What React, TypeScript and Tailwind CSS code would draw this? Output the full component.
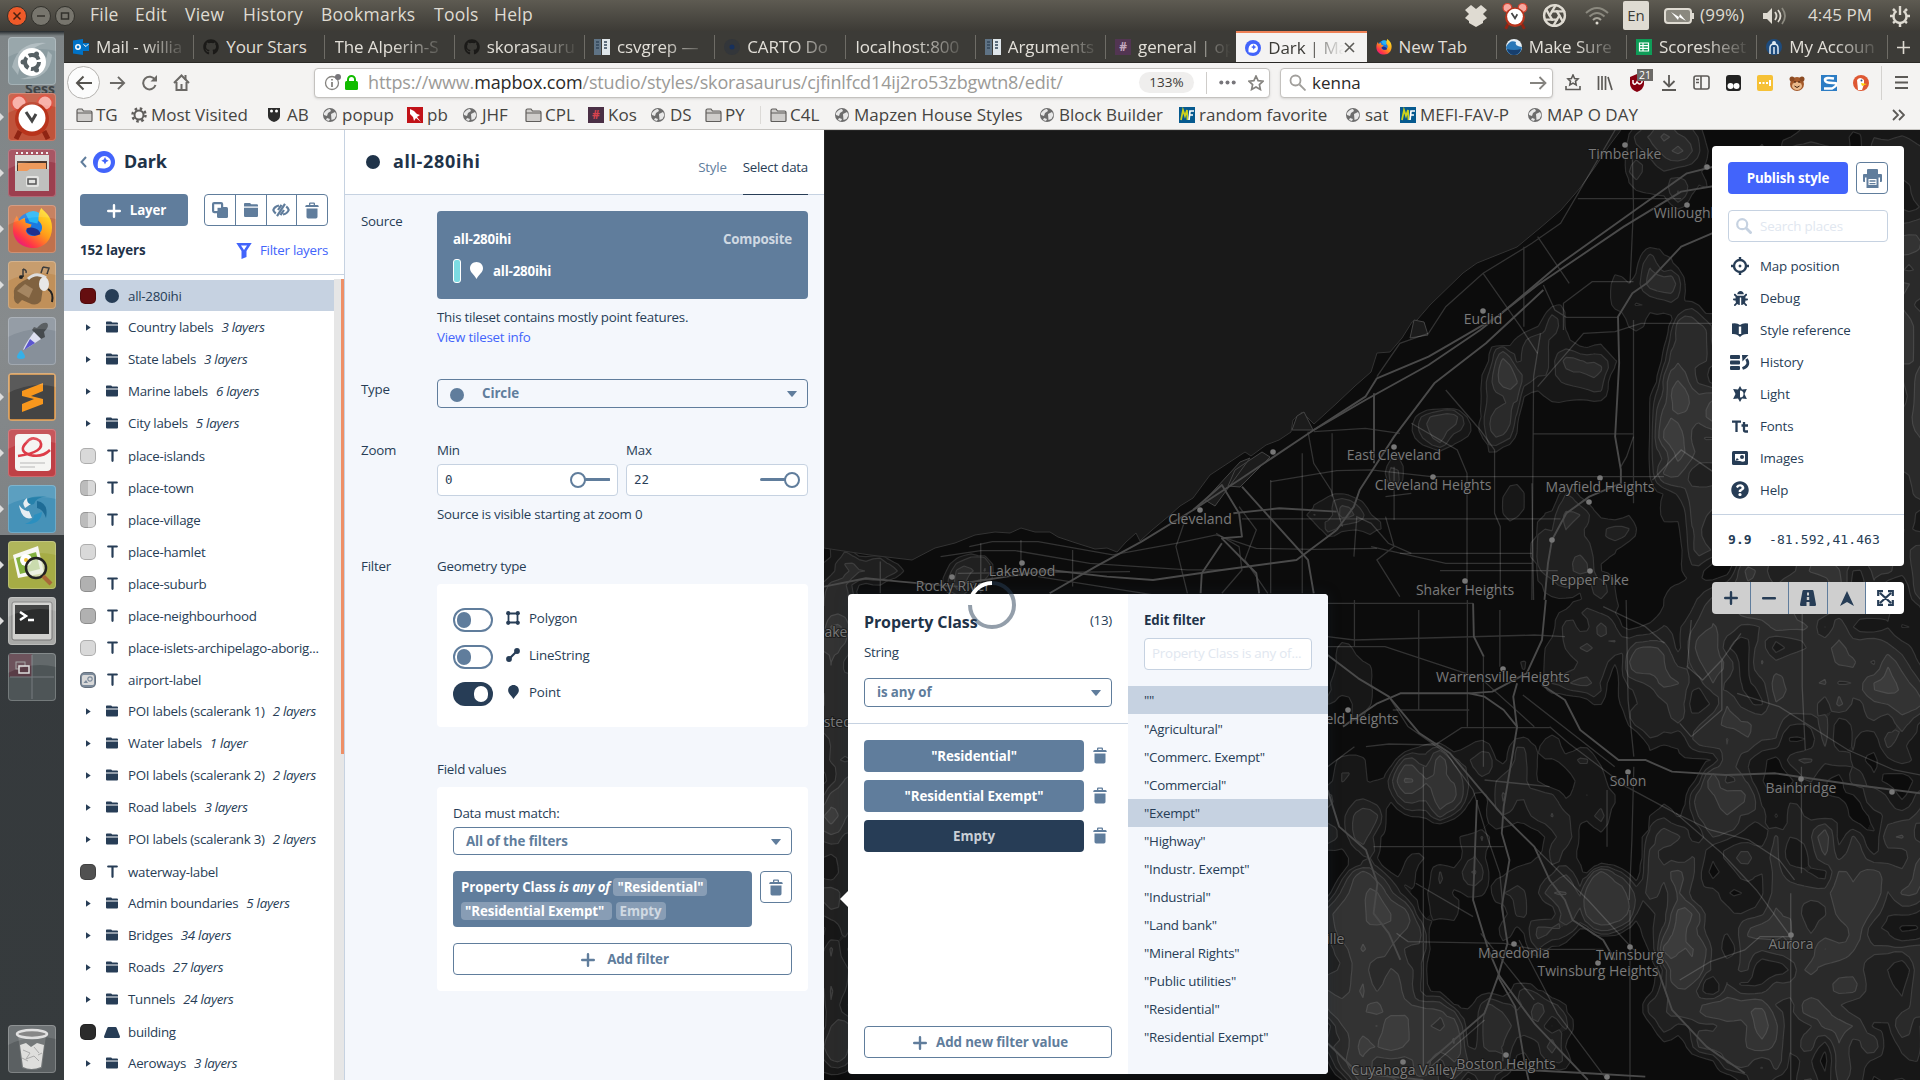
import React from "react";
import { FaGithub, FaBug, FaQuestionCircle } from "react-icons/fa";
import { Aperture } from "lucide-react";

const UI = "font-['Open_Sans',sans-serif]";

/* ---------- shared glyphs ---------- */
const Trash = ({ className = "" }: { className?: string }) => (
  <svg viewBox="0 0 14 17" width="14" height="17" fill="currentColor" className={className}>
    <path d="M4 3V1.500Q4 .4 5.100 .4h3.800q1.100 0 1.100 1.100V3h2.400q1.400 0 1.400 2H.2q0-2 1.400-2zM5.300 3h3.400V1.700H5.300zM1.500 6.600h11v8.200q0 1.600-1.600 1.600H3.100q-1.600 0-1.600-1.600z" />
  </svg>
);
const Folder = ({ className = "" }: { className?: string }) => (
  <svg viewBox="0 0 12 12" width="12" height="12" fill="currentColor" className={className}>
    <path d="M0 1.200Q0 .4 .8 .4h4.400l1 1h4.800q1 0 1 1v1H0zM0 4.600h12v6q0 1-1 1H1q-1 0-1-1z" />
  </svg>
);
const Plus = ({ s = 14, className = "" }: { s?: number; className?: string }) => (
  <svg viewBox="0 0 14 14" width={s} height={s} stroke="currentColor" strokeWidth="2.400" strokeLinecap="round" className={className}>
    <path d="M7 1.200v11.600M1.200 7h11.600" />
  </svg>
);
const Caret = () => (
  <svg viewBox="0 0 10 6" width="10" height="6" fill="currentColor"><path d="M.5 0h9q.6 0 .2.500L5.600 5.500q-.6.600-1.200 0L.3.500Q-.1 0 .5 0z" /></svg>
);
const Pin = ({ w = 12, h = 16, className = "" }: { w?: number; h?: number; className?: string }) => (
  <svg viewBox="0 0 13 17" width={w} height={h} fill="currentColor" className={className}><path d="M6.500 0C10.200 0 13 2.800 13 6.300c0 4-3.800 6-6.500 10.700C3.800 12.300 0 10.300 0 6.300 0 2.800 2.800 0 6.500 0z" /></svg>
);
const MapboxLogo = ({ s }: { s: number }) => (
  <svg viewBox="0 0 22 22" width={s} height={s}>
    <circle cx="11" cy="11" r="11" fill="#4264fb" />
    <path d="M5 17c-.6-3.800-.3-7.800 2-10.100a6.300 6.300 0 0 1 9 0c2.500 2.500 2.500 6.400 0 8.900C13.600 18 9 17.700 5 17z" fill="#fff" />
    <path d="M12 6l1.200 2.500 2.500 1.200-2.500 1.200L12 13.400l-1.200-2.500-2.500-1.200 2.500-1.200z" fill="#4264fb" />
  </svg>
);
const Globe = () => (
  <svg viewBox="0 0 16 16" width="16" height="16"><circle cx="8" cy="8" r="7" fill="#6d6d6d" /><path d="M2 6q3-4 6-4l1 2-3 2-1 3-3-1zM9 7l4-2 1.500 3-2 4-3 1zM5 11l3 1-1 2-3-1z" fill="#e8e8e8" /></svg>
);
const FolderOutline = () => (
  <svg viewBox="0 0 17 16" width="17" height="16" fill="#cfcdcb" stroke="#5f5d5b" strokeWidth="1.200"><path d="M1 3.500q0-1.500 1.500-1.500h3.500l1.500 2h7q1.500 0 1.500 1.500v8q0 1-1 1h-13q-1 0-1-1zM1 6h15" /></svg>
);
const Firefox = ({ s }: { s: number }) => (
  <svg viewBox="0 0 42 42" width={s} height={s}>
    <defs><linearGradient id="ffx" x1="0.900" y1="0.100" x2="0.200" y2="1"><stop offset="0" stopColor="#ffe226" /><stop offset=".45" stopColor="#ff9a1a" /><stop offset=".8" stopColor="#ff3647" /><stop offset="1" stopColor="#e3158a" /></linearGradient></defs>
    <circle cx="21" cy="21" r="17" fill="#1c79e0" />
    <path d="M14 6q8-6 15 0l-3 10-8-2z" fill="#25b4f5" />
    <path d="M5 8l2 5 6-3 1 5 6 2-1 3-5 3c2 6 8 7 13 4 6-5 4-11 0-14 0-6 1-10 3-13 3 4 11 8 11 20 0 13-8 21-19 21S1 34 1 22c0-6 1-10 4-14z" fill="url(#ffx)" />
    <path d="M15 21q4-2 9 0 5 2 5 6-6 3-11 0-4-2-3-6z" fill="#20308f" />
  </svg>
);

/* ---------- system bar ---------- */
const MENU: [string, number][] = [["File", 45], ["Edit", 50], ["View", 58], ["History", 78], ["Bookmarks", 113], ["Tools", 60], ["Help", 60]];

function SystemBar() {
  return (
    <div className="flex h-[31px] w-full items-center bg-gradient-to-b from-[#5e5b52] to-[#3d3b36] text-[17px] text-[#dfdbd2]">
      <div className="flex w-[90px] gap-[4px] pl-[7px]">
        <svg width="20" height="20" viewBox="0 0 20 20"><circle cx="10" cy="10" r="9.500" fill="#ef5a29" stroke="#32312c" /><path d="M6.500 6.500l7 7m0-7l-7 7" stroke="#4a2010" strokeWidth="1.500" /></svg>
        <svg width="20" height="20" viewBox="0 0 20 20"><circle cx="10" cy="10" r="9.500" fill="#77756d" stroke="#32312c" /><path d="M6 10h8" stroke="#33322d" strokeWidth="1.500" /></svg>
        <svg width="20" height="20" viewBox="0 0 20 20"><circle cx="10" cy="10" r="9.500" fill="#77756d" stroke="#32312c" /><path d="M6.500 7h7v6h-7z" fill="none" stroke="#33322d" strokeWidth="1.500" /></svg>
      </div>
      {MENU.map(([t, w]) => (
        <div key={t} className="mb-[2px] shrink-0 whitespace-nowrap text-[17.500px] leading-[29px] tracking-[0.250px]" style={{ width: w }}>{t}</div>
      ))}
      <div className="flex-1" />
      <div className="flex w-[456px] items-center">
        <svg width="24" height="24" viewBox="0 0 24 24" fill="#dfdbd2"><path d="M7 1l5 4 5-4 6 5-4 4 4 4-4 3v2l-7 4-7-4v-2l-4-3 4-4-4-4z" /></svg>
        <svg className="ml-[13px]" width="28" height="28" viewBox="0 0 48 48"><ClockArt /></svg>
        <Aperture className="ml-[13px]" size={25} color="#dfdbd2" strokeWidth={2.300} />
        <svg className="ml-[18px]" width="24" height="20" viewBox="0 0 24 20" fill="none" stroke="#a5a298" strokeWidth="2"><path d="M1 7q11-10 22 0M4.500 10.500q7.500-7 15 0" stroke="#8b897f" /><path d="M8 14q4-4 8 0" /><circle cx="12" cy="17" r="1.500" fill="#dfdbd2" stroke="none" /></svg>
        <div className="ml-[14px] flex h-[29px] w-[26px] items-center justify-center rounded-[2px] bg-[#dfdbd2] text-[15px] text-[#3c3b37]">En</div>
        <svg className="ml-[15px]" width="31" height="18" viewBox="0 0 31 18"><rect x="1" y="2" width="26" height="14" rx="3" fill="#8a887f" stroke="#dfdbd2" strokeWidth="2" /><path d="M28 6h2v6h-2z" fill="#dfdbd2" /><path d="M7 5l8 5 1-3 6 7-7-4-1 3z" fill="#fff" /></svg>
        <div className="mb-[2px] ml-[5px] w-[62px] whitespace-nowrap tracking-[0.200px]">(99%)</div>
        <svg width="25" height="20" viewBox="0 0 25 20" fill="none" stroke="#dfdbd2" strokeWidth="1.800"><path d="M1 7h4l5-5v16l-5-5H1z" fill="#dfdbd2" stroke="none" /><path d="M13 6q3 4 0 8" /><path d="M16 4q5 6 0 12" /><path d="M20 2q6 8 0 16" stroke="#8b897f" /></svg>
        <div className="mb-[2px] ml-[21px] w-[82px] whitespace-nowrap tracking-[0.100px]">4:45 PM</div>
        <svg width="20" height="22" viewBox="0 0 20 22" fill="none" stroke="#dfdbd2"><path d="M6.500 6a6.500 6.500 0 1 0 7 0" strokeWidth="2.400" /><path d="M10 1v9" strokeWidth="2.400" /><path d="M3 4l2 2M17 4l-2 2M0 11h3M20 11h-3M3 18l2-1.500M17 18l-2-1.500M10 18v4" strokeWidth="2.500" /></svg>
      </div>
    </div>
  );
}

/* ---------- launcher ---------- */
const ClockArt = () => (
  <g>
    <circle cx="11" cy="10" r="7.500" fill="#f7a9a0" stroke="#d9432f" strokeWidth="2" /><circle cx="37" cy="10" r="7.500" fill="#f7a9a0" stroke="#d9432f" strokeWidth="2" />
    <path d="M12 38l-4 8M36 38l4 8" stroke="#8f2413" strokeWidth="5" /><circle cx="24" cy="26" r="17" fill="#b8341c" /><circle cx="24" cy="25" r="13.500" fill="#fff" />
    <path d="M18 19l6 9 4-7" fill="none" stroke="#444" strokeWidth="3" />
  </g>
);
const TILES: { bg: string; art: React.ReactNode; run?: boolean }[] = [
  { bg: "#8b9ba0", art: <g><path d="M4 30Q10 4 38 6 14 12 10 38zM44 18Q42 44 12 42 36 38 40 14z" fill="#a9b6ba" /><circle cx="24" cy="25" r="14" fill="#fff" /><circle cx="24" cy="25" r="7" fill="none" stroke="#566064" strokeWidth="4" strokeDasharray="12 2.660" /><circle cx="15" cy="25" r="2.500" fill="#566064" /><circle cx="28.500" cy="17" r="2.500" fill="#566064" /><circle cx="28.500" cy="33" r="2.500" fill="#566064" /></g> },
  { bg: "#c0533a", art: <ClockArt />, run: true },
  { bg: "#9c3f4f", art: <g><path d="M7 6h34v20H7z" fill="#d8d8d5" /><path d="M9 12h30v10H9z" fill="#49352a" /><path d="M10 14h28v9H10z" fill="#ee9a5c" /><path d="M7 22h12l3-2h19v22H7z" fill="#bfc0be" /><path d="M8 4h2m3 0h2m3 0h2m3 0h2m3 0h2m3 0h2m3 0h2" stroke="#eee" strokeWidth="2" /><rect x="18" y="27" width="13" height="11" rx="2" fill="#e3e3e1" /><path d="M20 30h8v5h-8z" fill="none" stroke="#555" strokeWidth="1.500" /></g>, run: true },
  { bg: "#c0714c", art: <g transform="translate(4 3)"><Firefox s={41} /></g>, run: true },
  { bg: "#c0905a", art: <g><path d="M6 34q-2-8 9-14l8-4q10-4 13 4l-3 20q-5 6-12 2l-7-3-4 4q-5-2-4-9z" fill="#806240" /><path d="M9 30l8-7 8 5-4 9z" fill="#a58662" /><path d="M20 18q8-8 18-1" fill="none" stroke="#ddd" strokeWidth="3" /><ellipse cx="36" cy="23" rx="5" ry="7" fill="#e8e8e8" /><path d="M40 28q6 4 4 13" fill="none" stroke="#222" strokeWidth="2" /><path d="M15 8v8M15 8q4 1 3 4M35 6l6 1-2 6M35 6l-2 6" stroke="#222" fill="none" strokeWidth="1.500" /><circle cx="13" cy="16" r="2" fill="#222" /></g>, run: true },
  { bg: "#87909a", art: <g><path d="M29 11q5-6 10-5 3 3-3 9l1 5-4 2-9-9 2-3z" fill="#454a4e" /><path d="M26 15l7 7-12 8-6 3q2-6 11-18z" fill="#dcdff0" /><path d="M22 22l5 4-11 7z" fill="#5b56cf" /><path d="M13 33q-8 9 0 9 8 0 0-9z" fill="#36b0e8" /></g> },
  { bg: "#c98b45", art: <g><path d="M2 2h44v44H2z" fill="#444" /><path d="M14 18l21-8v8l-12 5 12 3v5l-21 8v-8l12-5-12-3z" fill="#f8971d" /></g>, run: true },
  { bg: "#bf4046", art: <g><rect x="7" y="5" width="36" height="37" rx="4" fill="#f5f5f3" /><path d="M10 27q28-4 22-15-8-6-14 2-8 8 4 12 12 3 20-5" fill="none" stroke="#dd3c48" strokeWidth="2.600" /><path d="M12 34h25M12 38h15" stroke="#ccc" strokeWidth="1.500" /></g>, run: true },
  { bg: "#4692b8", art: <g><path d="M16 22Q14 10 39 11 27 13 26 19z" fill="#2681ab" /><path d="M29 16q12 2 9 17-3-9-9-10z" fill="#1e6c96" /><path d="M34 27q-1 13-17 12 9-3 9-9z" fill="#2b8fbf" /><path d="M24 33q-10 3-13-13 5 7 10 6z" fill="#e8eef2" /><path d="M17 23q-4-6 2-10 0 6 4 6z" fill="#e8eef2" /></g>, run: true },
  { bg: "#a6ac45", art: <g><path d="M5 14l25-9 6 27-26 5z" fill="#f7f7f2" /><path d="M8 17l20-6 4 17-20 5z" fill="#82b040" /><circle cx="18" cy="19" r="6" fill="#fff" /><circle cx="18" cy="19" r="2" fill="#f0c030" /><circle cx="28" cy="27" r="10" fill="#e8eedd" fillOpacity=".7" stroke="#222" strokeWidth="2.500" /><path d="M35 35l8 8" stroke="#a86838" strokeWidth="4" /></g>, run: true },
  { bg: "#a8a9a7", art: <g><rect x="4" y="5" width="40" height="38" rx="2" fill="#d0d0cd" stroke="#777" /><path d="M7 8h34v29H7z" fill="#2b2c2c" /><path d="M12 15l6 4-6 4M20 23h6" stroke="#fff" strokeWidth="2.500" fill="none" /></g>, run: true },
  { bg: "#4e5557", art: <g><path d="M1 1h23v23H1z" fill="#593c46" /><path d="M2 24h44M24 2v44" stroke="#777d80" /><rect x="8" y="9" width="9" height="7" fill="none" stroke="#999" /><rect x="11" y="13" width="10" height="7" fill="#593c46" stroke="#ddd" strokeWidth="1.500" /></g> },
];

const Tile = ({ bg, art, run }: { bg: string; art: React.ReactNode; run?: boolean }) => (
  <div className="relative ml-[8px] h-[48px] w-[48px] shrink-0 overflow-visible">
    <div className="h-[48px] w-[48px] overflow-hidden rounded-[4px] shadow-[inset_0_0_0_1px_rgba(255,255,255,0.22)]" style={{ backgroundColor: bg }}>
      <svg width="48" height="48" viewBox="0 0 48 48">{art}<path d="M0 0h48v14Q24 8 0 20z" fill="#fff" opacity=".12" /></svg>
    </div>
    {run && <svg className="absolute -left-2 top-5" width="4" height="8" viewBox="0 0 4 8"><path d="M0 0l4 4-4 4z" fill="#ddd" /></svg>}
  </div>
);

function Launcher() {
  return (
    <div className="relative flex w-[64px] shrink-0 flex-col overflow-hidden bg-[linear-gradient(#23282b_0px,#7e8486_5px,#878b8d_300px,#7e8284_504px,#35393c_504px,#363b3d_100%)] pb-[7px] pt-[6px]">
      <span className="absolute left-[25px] top-[50px] text-[14px] font-bold leading-[16px] text-[#3f4446]">Sess</span>
      <div className="relative flex flex-col gap-[8px]">
        {TILES.map((t, i) => <Tile key={i} {...t} />)}
      </div>
      <div className="flex-1" />
      <Tile bg="#5b6062" art={<g><path d="M10 10l4 33q10 4 20 0l4-33z" fill="#858888" opacity=".6" /><ellipse cx="24" cy="9" rx="15" ry="4" fill="#777" stroke="#ddd" strokeWidth="2.500" /><path d="M12 20l6-2 5 4 6-4 7 2-3 22q-10 4-18 0z" fill="#dededc" /><path d="M15 25l7 3-4 6 8-3 5 5M26 22l5 6M14 33l6 3M30 30l4-2" stroke="#aaa" fill="none" /></g>} />
    </div>
  );
}

/* ---------- tabs ---------- */
const Outlook = <svg width="16" height="16" viewBox="0 0 16 16"><path d="M0 1.500L10 0v16L0 14.500z" fill="#0072c6" /><path d="M10 4h6v8h-6z" fill="#0072c6" /><path d="M10.500 5.500l2.500 2 2.500-2.500" stroke="#fff" fill="none" /><circle cx="5" cy="8" r="2.200" fill="none" stroke="#fff" strokeWidth="1.500" /></svg>;
const Git = <FaGithub size={16} color="#1b1a18" />;
const Docs = <svg width="16" height="16" viewBox="0 0 16 16"><path d="M0 0h7v16H0z" fill="#5f7385" /><path d="M8 0h8v16H8z" fill="#dfe6ea" /><path d="M2 3h3M2 6h3M2 9h3M10 3h3M10 6h3M10 9h3" stroke="#33475a" strokeWidth="1.500" /></svg>;
const Slack = ({ dim }: { dim?: boolean }) => <div className={`flex h-4 w-4 items-center justify-center text-[12px] font-bold ${dim ? "bg-[#523552] text-[#c4a8bf]" : "bg-[#4a2f45] text-[#d8434e]"}`}>#</div>;
const TABS: { t: string; icon?: React.ReactNode; active?: boolean; nofade?: boolean }[] = [
  { t: "Mail - willia", icon: Outlook },
  { t: "Your Stars", icon: Git, nofade: true },
  { t: "The Alperin-S" },
  { t: "skorasauru", icon: Git },
  { t: "csvgrep —", icon: Docs },
  { t: "CARTO Do", icon: <svg width="16" height="16" viewBox="0 0 16 16"><circle cx="8" cy="8" r="8" fill="#33363a" /><circle cx="8" cy="8" r="2.500" fill="#17305c" /></svg> },
  { t: "localhost:800" },
  { t: "Arguments", icon: Docs },
  { t: "general | op", icon: <Slack dim /> },
  { t: "Dark | Ma", icon: <MapboxLogo s={16} />, active: true },
  { t: "New Tab", icon: <Firefox s={16} />, nofade: true },
  { t: "Make Sure", icon: <svg width="16" height="16" viewBox="0 0 16 16"><circle cx="8" cy="8" r="8" fill="#e8f1f7" /><path d="M0 8q4-8 10-5-2 4 6 5-1 8-8 8T0 8z" fill="#2a78b8" /><path d="M1 10q7 2 14 0-2 6-7 6t-7-6z" fill="#173f6e" /></svg> },
  { t: "Scoresheet", icon: <svg width="16" height="16" viewBox="0 0 16 16"><path d="M0 0h16v16H0z" fill="#0f9d58" /><path d="M3.500 4h9v8h-9zM3.500 6.700h9M3.500 9.300h9M7 4v8" stroke="#fff" fill="none" strokeWidth="1.200" /></svg> },
  { t: "My Accoun", icon: <svg width="16" height="16" viewBox="0 0 16 16"><circle cx="8" cy="8" r="8" fill="#1d4b7d" /><path d="M4 15V9q0-4 4-4t4 4v6M8 8v7" stroke="#dfeaf3" fill="none" strokeWidth="1.500" /><circle cx="8" cy="4" r="2" fill="#dfeaf3" /></svg> },
];

function TabStrip() {
  return (
    <div className="flex h-[31px] bg-[#3c3b37] text-[17px] tracking-[-0.100px] text-[#e2dfd8]">
      {TABS.map((tab, i) => (
        <div key={tab.t} className={`flex w-[130.250px] shrink-0 items-center overflow-hidden ${tab.active ? "border-t-2 border-[#ee8156] bg-[#f4f3f2] text-[#3c3b37]" : ""}`}>
          <div className={`flex min-w-0 flex-1 items-center ${tab.icon ? "pl-[9px]" : "pl-[10px]"}`}>
            {tab.icon && <div className="mr-[7px] shrink-0">{tab.icon}</div>}
            <div className={`flex-1 overflow-hidden whitespace-nowrap leading-[28px] ${tab.active ? "mr-0" : "mr-[5px]"} ${tab.nofade ? "" : "[mask-image:linear-gradient(to_right,black_50%,transparent_100%)]"}`}>{tab.t}</div>
            {tab.active && <svg className="mr-[12px] shrink-0" width="11" height="11" viewBox="0 0 11 11" stroke="#5c5b57" strokeWidth="1.600"><path d="M1 1l9 9M10 1l-9 9" /></svg>}
          </div>
          {i !== 8 && i !== 9 && <div className="h-[24px] w-px shrink-0 bg-[#6e6c66]" />}
        </div>
      ))}
      <div className="flex flex-1 items-center justify-center pt-0.5"><svg width="13" height="13" viewBox="0 0 13 13" stroke="#dfdbd2" strokeWidth="1.600"><path d="M6.500 0v13M0 6.500h13" /></svg></div>
    </div>
  );
}

/* ---------- navigation bar ---------- */
const TOOLBAR_ICONS: React.ReactNode[] = [
  <svg width="16" height="17" viewBox="0 0 16 17" fill="none" stroke="currentColor" strokeWidth="1.600"><path d="M8 1l1.600 3.500 3.400.4-2.500 2.400.7 3.600L8 9.100l-3.200 1.800.7-3.600L3 4.900l3.400-.4zM1 12v3.500h14V12" /></svg>,
  <svg width="16" height="16" viewBox="0 0 16 16" fill="none" stroke="currentColor" strokeWidth="1.700"><path d="M1.500 1v14M5 1v14M8.500 1v14M11 2l4 13" /></svg>,
  <div className="relative h-[18px] w-[16px]"><svg width="16" height="18" viewBox="0 0 16 18"><path d="M8 0l7 3v7q0 5-7 8-7-3-7-8V3z" fill="#860010" /><path d="M4 6v3q2 3 4-1 3 4 5 0V6" stroke="#fff" fill="none" strokeWidth="1.500" /></svg><span className="absolute -top-[5px] left-[8px] bg-[#6b6966] px-[2px] text-[10.500px] leading-[12px] text-white">21</span></div>,
  <svg width="14" height="16" viewBox="0 0 14 16" fill="none" stroke="currentColor" strokeWidth="1.800"><path d="M7 0v11M1.500 6L7 11.500 12.500 6M0 15h14" /></svg>,
  <svg width="17" height="15" viewBox="0 0 17 15" fill="none" stroke="currentColor" strokeWidth="1.600"><rect x="1" y="1" width="15" height="13" rx="2" /><path d="M8 1v13M3 4.500h3M3 7.500h3" /></svg>,
  <svg width="15" height="16" viewBox="0 0 15 16"><rect width="15" height="16" rx="3" fill="#222" /><circle cx="4.500" cy="11" r="3" fill="#fff" /><circle cx="10.500" cy="11" r="3" fill="#fff" /></svg>,
  <svg width="16" height="16" viewBox="0 0 16 16"><rect width="16" height="16" rx="2" fill="#f6c136" /><path d="M2 8h2m1.500 0h2M9 8h2m2-3v6" stroke="#fff" strokeWidth="2" /></svg>,
  <svg width="16" height="16" viewBox="0 0 16 16"><circle cx="8" cy="9" r="7" fill="#a55a2b" /><circle cx="3" cy="4" r="2.500" fill="#8b4a22" /><circle cx="13" cy="4" r="2.500" fill="#8b4a22" /><ellipse cx="8" cy="11" rx="5" ry="4" fill="#eab98a" /><path d="M5.500 11q2.500 3 5 0M6 6v2M10 6v2" stroke="#3d1d0c" fill="none" /></svg>,
  <svg width="16" height="16" viewBox="0 0 16 16"><rect width="16" height="16" fill="#2c7cc4" /><path d="M13 3.500Q4 2 4 5t8 3-1 5.500H3" stroke="#fff" strokeWidth="2.600" fill="none" /></svg>,
  <svg width="16" height="16" viewBox="0 0 16 16"><circle cx="8" cy="8" r="8" fill="#de5833" /><path d="M5 15L4 5q3-4 7 0v4l-2 6z" fill="#fff" /><path d="M8 8l6 1-5 2z" fill="#fdd20a" /><circle cx="8.500" cy="5.500" r="1" fill="#2d4f8e" /></svg>,
];

function NavBar() {
  return (
    <div className="flex h-[40px] items-center border-t border-[#2a2926] bg-[#f4f3f2] text-[17px] text-[#3c3b37]">
      <div className="ml-[3px] flex h-[33px] w-[33px] shrink-0 items-center justify-center rounded-full border border-[#b5b3b0] bg-[#fcfcfc]">
        <svg width="18" height="16" viewBox="0 0 18 16" fill="none" stroke="#55534f" strokeWidth="2"><path d="M17 8H2M8.500 1.500L2 8l6.500 6.500" /></svg>
      </div>
      <svg className="ml-[9px]" width="17" height="16" viewBox="0 0 18 16" fill="none" stroke="#6b6966" strokeWidth="2"><path d="M1 8h15M9.500 1.500L16 8l-6.500 6.500" /></svg>
      <svg className="ml-[15px]" width="17" height="16" viewBox="0 0 17 16" fill="none" stroke="#6b6966" strokeWidth="2"><path d="M14 5A6.300 6.300 0 1 0 14.500 10" /><path d="M16 0v6.500H9.500z" fill="#6b6966" stroke="none" /></svg>
      <svg className="ml-[15px]" width="17" height="17" viewBox="0 0 17 17" fill="none" stroke="#6b6966" strokeWidth="2"><path d="M1 9l7.500-7.500L16 9M3.500 8v8h10V8" /><path d="M8.500 10v6M12.500 1v5" /></svg>
      <div className="ml-[124px] flex h-[30px] w-[956px] shrink-0 items-center rounded-[4px] border border-[#c4c2bf] bg-white shadow-sm">
        <svg className="ml-[9px]" width="17" height="17" viewBox="0 0 17 17" fill="none" stroke="#85837f" strokeWidth="1.300"><circle cx="8" cy="9" r="6.500" /><path d="M8 8v5M8 5v1.500" strokeWidth="1.800" /><circle cx="14" cy="3" r="3" fill="#77757a" stroke="none" /></svg>
        <svg className="ml-[4px]" width="13" height="15" viewBox="0 0 13 15"><path d="M3 7V4.500a3.500 3.500 0 0 1 7 0V7" fill="none" stroke="#12bc00" strokeWidth="2" /><rect y="6" width="13" height="9" rx="1.500" fill="#12bc00" /></svg>
        <div className="ml-[10px] w-[771px] whitespace-nowrap text-[18px] leading-[27px] tracking-[-0.150px] text-[#9b9a97]">https://www.<span className="text-[#2b2a28]">mapbox.com</span>/studio/styles/skorasaurus/cjfinlfcd14ij2ro53zbgwtn8/edit/</div>
        <div className="flex h-[21px] w-[55px] items-center justify-center rounded-full bg-[#efeeed] text-[13.500px] text-[#3c3b37]">133%</div>
        <div className="ml-[12px] h-[22px] w-px bg-[#cfcdca]" />
        <svg className="ml-[12px]" width="17" height="5" viewBox="0 0 17 5" fill="#77757a"><circle cx="2.300" cy="2.500" r="2" /><circle cx="8.500" cy="2.500" r="2" /><circle cx="14.700" cy="2.500" r="2" /></svg>
        <svg className="ml-[12px]" width="16" height="16" viewBox="0 0 16 16" fill="none" stroke="#85837f" strokeWidth="1.700"><path d="M8 1l2.100 4.600 5 .6-3.700 3.400 1 4.900L8 12l-4.400 2.500 1-4.900L.9 6.200l5-.6z" /></svg>
      </div>
      <div className="ml-[10px] flex h-[30px] w-[273px] shrink-0 items-center rounded-[4px] border border-[#c4c2bf] bg-white pl-[8px] pr-[5px] shadow-sm">
        <svg width="17" height="17" viewBox="0 0 17 17" fill="none" stroke="#a09e9b" strokeWidth="1.800"><circle cx="6.500" cy="6.500" r="5" /><path d="M10.500 10.500l6 6" /></svg>
        <div className="ml-[6px] flex-1 leading-[26px] text-[#2b2a28]">kenna</div>
        <svg width="17" height="14" viewBox="0 0 17 14" fill="none" stroke="#85837f" strokeWidth="1.800"><path d="M0 7h15.500M9.500 1l6 6-6 6" /></svg>
      </div>
      <div className="ml-[4px] flex shrink-0 items-center text-[#5c5a57]">
        {TOOLBAR_ICONS.map((ic, i) => <div key={i} className="flex w-[32px] justify-center">{ic}</div>)}
      </div>
      <div className="ml-[4px] h-[34px] w-px shrink-0 bg-[#d4d2cf]" />
      <svg className="ml-[13px]" width="13" height="13" viewBox="0 0 13 13" stroke="#5c5a57" strokeWidth="1.900"><path d="M0 1h13M0 6.500h13M0 12h13" /></svg>
    </div>
  );
}

/* ---------- bookmarks ---------- */
const MF = () => <svg width="16" height="16" viewBox="0 0 16 16"><path d="M0 0h16v16H0z" fill="#065a8f" /><path d="M2 13l2-10 2 6 2-6 .5 10" stroke="#cdd21c" strokeWidth="1.700" fill="none" /><path d="M10 13l1-9h4M10.500 8h3.500" stroke="#fff" strokeWidth="1.700" fill="none" /></svg>;
const BOOKMARKS: [string, React.ReactNode, number][] = [
  ["TG", <FolderOutline />, 55],
  ["Most Visited", <svg width="16" height="16" viewBox="0 0 16 16" fill="none" stroke="#5f5d5b"><circle cx="8" cy="8" r="4.500" strokeWidth="2" /><circle cx="8" cy="8" r="6.500" strokeWidth="2.500" strokeDasharray="2.500 2.600" /></svg>, 136],
  ["AB", <svg width="14" height="16" viewBox="0 0 14 16"><path d="M1 1h12v8q0 4-6 6-6-2-6-6z" fill="#2c2c2c" /><circle cx="4.500" cy="4" r="1.500" fill="#fff" /><circle cx="9.500" cy="4" r="1.500" fill="#fff" /></svg>, 55],
  ["popup", <Globe />, 85],
  ["pb", <svg width="16" height="16" viewBox="0 0 16 16"><path d="M0 0h16v16H0z" fill="#c11218" /><path d="M3 2l4 2 3 3 3 1-3 2 4 5-5-4-2 3-1-4-3-3z" fill="#fff" /></svg>, 55],
  ["JHF", <Globe />, 63],
  ["CPL", <FolderOutline />, 63],
  ["Kos", <Slack />, 62],
  ["DS", <Globe />, 55],
  ["PY", <FolderOutline />, 65],
  ["C4L", <FolderOutline />, 64],
  ["Mapzen House Styles", <Globe />, 205],
  ["Block Builder", <Globe />, 140],
  ["random favorite", <MF />, 166],
  ["sat", <Globe />, 55],
  ["MEFI-FAV-P", <MF />, 127],
  ["MAP O DAY", <Globe />, 365],
];
function BookmarksBar() {
  return (
    <div className="flex h-[28px] items-center border-b border-[#c6c4c1] bg-[#f4f3f2] pb-[2px] pl-[12px] text-[17px] text-[#454441]">
      {BOOKMARKS.map(([t, icon, w]) => (
        <div key={t} className="flex shrink-0 items-center whitespace-nowrap leading-[24px]" style={{ width: w }}>
          <span className="mr-[3px] flex w-[17px] shrink-0">{icon}</span>{t}
          {t === "PY" && <span className="ml-auto mr-[9px] h-[18px] w-px bg-[#dcdad7]" />}
        </div>
      ))}
      <svg width="13" height="12" viewBox="0 0 13 12" fill="none" stroke="#5c5a57" strokeWidth="1.800"><path d="M1 1l5 5-5 5M7 1l5 5-5 5" /></svg>
    </div>
  );
}

/* ---------- layers panel ---------- */
type Row = { name: string; count?: string; sw?: string; icon?: "circle" | "text" | "build"; img?: boolean };
const G = (name: string, count: string): Row => ({ name, count });
const L = (name: string, sw: string, icon: Row["icon"] = "text", img = false): Row => ({ name, sw, icon, img });
const LIGHT = "#d9d9d9", HALF = "linear-gradient(90deg,#bcbcbc 50%,#d9d9d9 50%)", MID = "#b1b1b1";
const ROWS: Row[] = [
  L("all-280ihi", "#650e10", "circle"),
  G("Country labels", "3 layers"), G("State labels", "3 layers"), G("Marine labels", "6 layers"), G("City labels", "5 layers"),
  L("place-islands", LIGHT), L("place-town", HALF), L("place-village", HALF), L("place-hamlet", LIGHT), L("place-suburb", MID), L("place-neighbourhood", MID),
  L("place-islets-archipelago-aborig...", LIGHT), L("airport-label", "#7d8b9b", "text", true),
  G("POI labels (scalerank 1)", "2 layers"), G("Water labels", "1 layer"), G("POI labels (scalerank 2)", "2 layers"), G("Road labels", "3 layers"), G("POI labels (scalerank 3)", "2 layers"),
  L("waterway-label", "#515151"),
  G("Admin boundaries", "5 layers"), G("Bridges", "34 layers"), G("Roads", "27 layers"), G("Tunnels", "24 layers"),
  L("building", "#2b2b2b", "build"), G("Aeroways", "3 layers"),
];

function LayersPanel() {
  return (
    <div className="flex w-[281px] shrink-0 flex-col overflow-hidden border-r border-[#c6d2e1] bg-white text-[13.333px] tracking-[-0.270px] text-[#273d56] [&_.font-bold]:tracking-[-0.100px]">
      <div className="h-[145px] shrink-0 border-b border-[#c6d2e1] pl-[16px] pr-[16px]">
        <div className="mt-[20px] flex h-[24px] items-center">
          <svg width="7" height="12" viewBox="0 0 7 12" fill="none" stroke="#607d9c" strokeWidth="2"><path d="M6 1L1.500 6 6 11" /></svg>
          <div className="ml-[6px]"><MapboxLogo s={22} /></div>
          <div className="mb-[2px] ml-[9px] font-['Noto_Sans',sans-serif] text-[18px] font-bold leading-[22px] text-[#1f3349]">Dark</div>
        </div>
        <div className="mt-[20px] flex items-center justify-between">
          <div className="flex h-[32px] w-[108px] items-center justify-center rounded-[4px] bg-[#607d9c] pl-[5px] pt-px font-bold text-white"><Plus className="mr-[9px]" />Layer</div>
          <div className="flex h-[32px] w-[124px] items-center divide-x divide-[#607d9c] rounded-[4px] border border-[#607d9c] text-[#607d9c]">
            <div className="flex h-full flex-1 items-center justify-center"><svg width="16" height="16" viewBox="0 0 16 16"><path d="M7 5h7.500q1.500 0 1.500 1.500v8q0 1.500-1.500 1.500h-8Q5 16 5 14.500V7q0-2 2-2z" fill="currentColor" /><rect x="1.100" y="1.100" width="9" height="9" rx="1" fill="#fff" stroke="currentColor" strokeWidth="2.200" /><path d="M5.500 10V5.800H10v4.500H5.500" fill="currentColor" /></svg></div>
            <div className="flex h-full flex-1 items-center justify-center"><svg width="14" height="14" viewBox="0 0 12 12" fill="currentColor"><path d="M0 .8Q0 0 .8 0h4.400l1 1h4.800q1 0 1 1v1H0zM0 4h12v7q0 1-1 1H1q-1 0-1-1z" /></svg></div>
            <div className="flex h-full flex-1 items-center justify-center"><svg width="18" height="14" viewBox="0 0 18 14" fill="none" stroke="currentColor" strokeWidth="2.200"><path d="M7 2.500Q2.500 3.500 1.300 7q.5 2 2.500 3.500M11 11.500q4.500-1 5.700-4.500-.5-2-2.500-3.500M13 .8L5 13.200M9.500 1.800L6 7M12 7l-3.500 5.200" /></svg></div>
            <div className="flex h-full flex-1 items-center justify-center"><Trash /></div>
          </div>
        </div>
        <div className="mt-[15px] flex h-[20px] items-center">
          <div className="flex-1 font-bold text-[#1f3349]">152 layers</div>
          <svg className="mr-[8px]" width="16" height="16" viewBox="0 0 16 16"><path d="M.3 0h15.400L10.500 8v6l-5 2V8z" fill="#4264fb" /><path d="M5 2.500h6L8 7z" fill="#fff" /></svg>
          <span className="text-[#4264fb]">Filter layers</span>
        </div>
      </div>
      <div className="flex min-h-0 flex-1">
        <div className="w-[270px] overflow-hidden pt-[5px]">
          {ROWS.map((r, i) => (
            <div key={r.name} className={`flex h-[32px] shrink-0 items-center pl-[16px] ${i === 0 ? "border-b border-white bg-[#c6d2e1] bg-clip-padding" : ""} ${r.count ? "pb-[2px]" : ""}`}>
              {r.sw ? (
                <div className="flex h-[16px] w-[16px] shrink-0 items-center justify-center rounded-[5px] border border-black/20" style={{ background: r.sw }}>
                  {r.img && <svg width="12" height="10" viewBox="0 0 12 10"><rect width="12" height="10" rx="1.500" fill="#d9d9d9" /><circle cx="8" cy="4" r="2.200" fill="none" stroke="#7d8b9b" strokeWidth="1.200" /><path d="M1.500 8l2.500-3 2 3z" fill="#7d8b9b" /></svg>}
                </div>
              ) : (
                <svg className="ml-[6px] mr-[5px] shrink-0" width="5" height="7" viewBox="0 0 5 7"><path d="M0 .3L4.700 3.500 0 6.700z" fill="#273d56" /></svg>
              )}
              <div className="flex w-[32px] shrink-0 justify-center">
                {!r.sw && <Folder />}
                {r.icon === "circle" && <div className="h-[14px] w-[14px] rounded-full bg-[#273d56]" />}
                {r.icon === "text" && <svg className="mb-[2px]" width="11" height="13" viewBox="0 0 11 13" fill="none" stroke="currentColor" strokeLinecap="round" strokeWidth="2.200"><path d="M1.200 1.500h8.600M5.500 1.500v10.300" /></svg>}
                {r.icon === "build" && <svg width="16" height="11" viewBox="0 0 16 11" fill="currentColor"><path d="M4.500 0h7q.8 0 1.200 1l3.300 8.500q0 1.500-1 1.500H1q-1 0-1-1.500L3.300 1q.4-1 1.200-1z" /></svg>}
              </div>
              <div className="whitespace-nowrap leading-[18px]">{r.name}{r.count && <span className="ml-[8px] italic tracking-[-0.270px]">{r.count}</span>}</div>
            </div>
          ))}
        </div>
        <div className="mt-[4px] flex w-[10px] bg-[#e6e6e6]"><div className="ml-[7px] h-[475px] w-[3px] bg-[#ee8f66]" /></div>
      </div>
    </div>
  );
}

/* ---------- layer details ---------- */
const Label = ({ children }: { children: React.ReactNode }) => <div className="w-[76px] shrink-0 leading-[20px]">{children}</div>;
const Chip = ({ children, dim }: { children: React.ReactNode; dim?: boolean }) => <span className={`mr-[4px] inline-block h-[18px] rounded-[4px] bg-white/25 px-[4px] leading-[18px] ${dim ? "text-[#d0d9e2]" : ""}`}>{children}</span>;
function Toggle({ on }: { on?: boolean }) {
  return on
    ? <div className="flex h-[24px] w-[40px] items-center justify-end rounded-full bg-[#273d56] pr-[5px]"><div className="h-[16px] w-[14px] rounded-full bg-white" /></div>
    : <div className="flex h-[24px] w-[40px] items-center rounded-full border-2 border-[#607d9c] pl-[2px]"><div className="h-[16px] w-[14px] rounded-full bg-[#607d9c]" /></div>;
}
const GEOMS: [string, boolean, React.ReactNode][] = [
  ["Polygon", false, <svg width="14" height="14" viewBox="0 0 14 14" fill="currentColor"><path d="M2.500 2.500h9v9h-9z" fill="none" stroke="currentColor" strokeWidth="1.800" /><circle cx="2.200" cy="2.200" r="2.100" /><circle cx="11.800" cy="2.200" r="2.100" /><circle cx="2.200" cy="11.800" r="2.100" /><circle cx="11.800" cy="11.800" r="2.100" /></svg>],
  ["LineString", false, <svg width="14" height="14" viewBox="0 0 14 14" fill="currentColor"><path d="M3 11l8-8" stroke="currentColor" strokeWidth="2.200" /><circle cx="3" cy="11" r="2.900" /><circle cx="11" cy="3" r="2.900" /></svg>],
  ["Point", true, <Pin w={11} h={14} />],
];

function DetailPanel() {
  return (
    <div className="flex w-[479px] shrink-0 flex-col bg-[#f4f7fc] text-[13.333px] tracking-[-0.240px] text-[#273d56] [&_.font-bold]:tracking-[-0.080px]">
      <div className="flex h-[65px] shrink-0 border-b border-[#c6d2e1] bg-white pl-[21px] pr-[16px]">
        <div className="mt-[25px] h-[14px] w-[14px] rounded-full bg-[#1f3349]" />
        <div className="ml-[13px] mt-[20px] flex-1 font-['Noto_Sans',sans-serif] text-[18px] font-[700] leading-[22px] tracking-[0.700px] text-[#1f3349]">all-280ihi</div>
        <div className="mr-[16px] mt-[27px] leading-[20px] text-[#607d9c]">Style</div>
        <div className="h-[65px] border-b border-[#273d56] pt-[27px] leading-[20px]">Select data</div>
      </div>
      <div className="flex flex-col pl-[16px] pr-[16px]">
        <div className="mt-[16px] flex">
          <div className="w-[76px] shrink-0 leading-[20px]">Source</div>
          <div className="flex-1">
            <div className="h-[88px] rounded-[4px] bg-[#607d9c] px-[16px] pt-[18px] font-bold text-white">
              <div className="flex justify-between leading-[20px]"><span className="tracking-[-0.200px]">all-280ihi</span><span className="tracking-[-0.200px] text-[#cfd8e2]">Composite</span></div>
              <div className="mt-[10px] flex h-[24px] items-center"><div className="h-[24px] w-[8px] rounded-[3px] border border-white bg-[#7cdbe3]" /><Pin w={13} h={17} className="mb-[2px] ml-[9px]" /><span className="ml-[10px] mt-px tracking-[-0.200px]">all-280ihi</span></div>
            </div>
            <div className="mt-[8px] leading-[20px]">This tileset contains mostly point features.<div className="text-[#4264fb]">View tileset info</div></div>
          </div>
        </div>
        <div className="mt-[32px] flex">
          <Label>Type</Label>
          <div className="flex h-[29px] flex-1 items-center rounded-[4px] border border-[#607d9c] px-[12px] pr-[10px] font-bold text-[#607d9c]">
            <div className="mt-[3px] h-[14px] w-[14px] rounded-full bg-[#607d9c]" /><span className="ml-[18px] flex-1">Circle</span><Caret />
          </div>
        </div>
        <div className="mt-[32px] flex">
          <Label>Zoom</Label>
          <div className="flex-1">
            <div className="flex gap-[8px]">
              <div className="w-[181px] leading-[20px]">Min
                <div className="mt-[4px] flex h-[32px] items-center rounded-[4px] border border-[#c6d2e1] bg-white px-[7px] font-['DejaVu_Sans_Mono',monospace] text-[12.500px] tracking-normal"><span className="flex-1">0</span><svg width="40" height="16" viewBox="0 0 40 16" fill="#fff" stroke="#607d9c"><path d="M16 7.500h23" strokeWidth="3" strokeLinecap="round" /><circle cx="8" cy="8" r="7" strokeWidth="2" /></svg></div>
              </div>
              <div className="flex-1 leading-[20px]">Max
                <div className="mt-[4px] flex h-[32px] items-center rounded-[4px] border border-[#c6d2e1] bg-white px-[7px] font-['DejaVu_Sans_Mono',monospace] text-[12.500px] tracking-normal"><span className="flex-1">22</span><svg width="40" height="16" viewBox="0 0 40 16" fill="#fff" stroke="#607d9c"><path d="M1.500 7.500h23" strokeWidth="3" strokeLinecap="round" /><circle cx="32" cy="8" r="7" strokeWidth="2" /></svg></div>
              </div>
            </div>
            <div className="mt-[8px] leading-[20px]">Source is visible starting at zoom 0</div>
          </div>
        </div>
        <div className="mt-[32px] flex">
          <Label>Filter</Label>
          <div className="flex-1">
            <div className="leading-[20px]">Geometry type</div>
            <div className="mt-[8px] flex h-[143px] flex-col gap-[13px] rounded-[4px] bg-white px-[16px] pt-[24px]">
              {GEOMS.map(([n, on, ic]) => (
                <div key={n} className="flex h-[24px] items-center"><Toggle on={on} /><div className="mb-[4px] ml-[13px] flex w-[14px] justify-center">{ic}</div><span className="mb-[3px] ml-[9px] tracking-[-0.160px]">{n}</span></div>
              ))}
            </div>
            <div className="mt-[32px] leading-[20px]">Field values</div>
            <div className="mt-[8px] h-[204px] rounded-[4px] bg-white px-[16px] pt-[16px]">
              <div className="leading-[20px]">Data must match:</div>
              <div className="mt-[4px] flex h-[28px] items-center rounded-[4px] border border-[#607d9c] pl-[12px] pr-[10px] pt-px font-bold text-[#607d9c]"><span className="flex-1">All of the filters</span><Caret /></div>
              <div className="mt-[16px] flex items-start justify-between">
                <div className="h-[56px] w-[299px] whitespace-nowrap rounded-[4px] bg-[#607d9c] px-[8px] pt-[4px] font-bold leading-[24px] text-white">
                  <div>Property Class <i className="tracking-[-0.200px]">is any of</i> <Chip>"Residential"</Chip></div>
                  <div><Chip>"Residential Exempt"&nbsp;</Chip><Chip dim>Empty</Chip></div>
                </div>
                <div className="flex h-[32px] w-[32px] items-center justify-center rounded-[4px] border border-[#607d9c] text-[#607d9c]"><Trash /></div>
              </div>
              <div className="mt-[16px] flex h-[32px] items-center justify-center rounded-[4px] border border-[#607d9c] pl-[5px] pt-px font-bold text-[#607d9c]"><Plus className="mr-[12px]" />Add filter</div>
            </div>
          </div>
        </div>
      </div>
    </div>
  );
}

/* ---------- map ---------- */
const X0 = 824, Y0 = 130, STEP = 7, COLS = 158, LINES = 137;

// Wooded areas as soft ellipses: centre x, centre y, radius x, radius y, strength.
const WOODS: [number, number, number, number, number][] = [
  [1880, 400, 205, 320, 0.36], [1700, 450, 55, 150, 0.38], [1690, 370, 34, 70, 0.46], [1800, 680, 190, 150, 0.34], [1860, 900, 180, 260, 0.3],
  [1690, 930, 60, 160, 0.3], [1685, 950, 32, 65, 0.5], [1660, 690, 50, 60, 0.4], [1725, 800, 45, 50, 0.42], [1560, 650, 70, 70, 0.25], [1535, 790, 60, 60, 0.25],
  [1370, 970, 66, 110, 0.5], [1400, 1050, 80, 70, 0.5], [1430, 785, 50, 48, 0.4], [1350, 800, 50, 70, 0.25], [1510, 1040, 70, 60, 0.24],
  [1570, 800, 50, 80, 0.25], [1610, 900, 34, 40, 0.42], [1740, 1030, 60, 55, 0.4], [1500, 400, 26, 60, 0.32], [1565, 360, 60, 60, 0.21],
  [1640, 290, 50, 50, 0.28], [1670, 160, 50, 60, 0.26], [1350, 515, 44, 26, 0.24], [1590, 550, 60, 70, 0.23], [1440, 430, 40, 24, 0.25],
  [836, 820, 40, 300, 0.34], [965, 575, 30, 26, 0.27], [860, 570, 50, 18, 0.24], [1395, 470, 14, 22, 0.3], [1515, 500, 16, 30, 0.28], [1810, 1030, 130, 100, 0.3],
  [1470, 760, 30, 50, 0.24], [1530, 900, 60, 60, 0.21], [1450, 880, 60, 60, 0.21], [1350, 690, 30, 60, 0.22],
];
function hash(a: number, b: number, s: number) {
  let t = Math.imul(a + 374761, 668265263) ^ Math.imul(b + 9277, 1274126177) ^ Math.imul(s, 974634777);
  t = Math.imul(t ^ (t >>> 13), 1274126177);
  return ((t ^ (t >>> 16)) >>> 0) / 4294967296;
}
function noise(x: number, y: number, s: number) {
  const i = Math.floor(x), j = Math.floor(y), u = x - i, v = y - j;
  const top = hash(i, j, s) * (1 - u) + hash(i + 1, j, s) * u;
  const low = hash(i, j + 1, s) * (1 - u) + hash(i + 1, j + 1, s) * u;
  return top * (1 - v) + low * v;
}
function field(x: number, y: number) {
  let bias = 0;
  for (const [cx, cy, rx, ry, amp] of WOODS) {
    const d = ((x - cx) / rx) ** 2 + ((y - cy) / ry) ** 2;
    if (d < 1) bias = Math.max(bias, amp * (1 - d * d));
  }
  if (bias === 0) return 0;
  return bias + 0.28 * noise(x / 16, y / 19, 3) + 0.3 * noise(x / 38, y / 46, 11);
}
const GRID = Array.from({ length: LINES }, (_, j) => Array.from({ length: COLS }, (_, i) => field(X0 + i * STEP, Y0 + j * STEP)));

// Marching squares: filled cells above the level, and the line round them.
function contour(level: number) {
  let area = "", line = "";
  const f = (n: number) => n.toFixed(1);
  for (let j = 0; j < LINES - 1; j++) {
    let run = -1;
    for (let i = 0; i < COLS; i++) {
      const full = i < COLS - 1 && GRID[j][i] > level && GRID[j][i + 1] > level && GRID[j + 1][i] > level && GRID[j + 1][i + 1] > level;
      if (full) { if (run < 0) run = i; continue; }
      if (run >= 0) { area += `M${X0 + run * STEP} ${Y0 + j * STEP}h${(i - run) * STEP}v${STEP}h${-(i - run) * STEP}z`; run = -1; }
      if (i === COLS - 1) break;
      const c: [number, number, number][] = [[i, j, GRID[j][i]], [i + 1, j, GRID[j][i + 1]], [i + 1, j + 1, GRID[j + 1][i + 1]], [i, j + 1, GRID[j + 1][i]]];
      if (c.every((p) => p[2] <= level)) continue;
      const poly: string[] = [], cuts: string[] = [];
      for (let k = 0; k < 4; k++) {
        const a = c[k], b = c[(k + 1) % 4];
        if (a[2] > level) poly.push(`${X0 + a[0] * STEP} ${Y0 + a[1] * STEP}`);
        if (a[2] > level !== b[2] > level) {
          const t = (level - a[2]) / (b[2] - a[2]);
          const p = `${f(X0 + (a[0] + (b[0] - a[0]) * t) * STEP)} ${f(Y0 + (a[1] + (b[1] - a[1]) * t) * STEP)}`;
          poly.push(p); cuts.push(p);
        }
      }
      area += "M" + poly.join("L") + "z";
      for (let k = 0; k + 1 < cuts.length; k += 2) line += `M${cuts[k]}L${cuts[k + 1]}`;
    }
  }
  return { area, line };
}
const CONTOURS = [
  { ...contour(0.43), fill: "#171717", stroke: "#2f2f2f" },
  { ...contour(0.52), fill: "#202020", stroke: "#363636" },
  { ...contour(0.6), fill: "#2a2a2a", stroke: "#3e3e3e" },
  { ...contour(0.69), fill: "#333333", stroke: "#474747" },
  { ...contour(0.79), fill: "#3c3c3c", stroke: "#4d4d4d" },
];
const COAST = "M824 548L870 555 912 560 935 548 955 543 975 535 995 532 1010 533 1021 528 1035 532 1050 532 1058 537 1073 542 1095 549 1107 548 1117 552 1126 542 1136 533 1140 541 1152 530 1170 515 1180 506 1193 498 1210 475 1245 452 1251 456 1266 445 1279 440 1291 432 1293 420 1302 412 1314 424 1337 403 1355 386 1371 372 1377 353 1390 352 1402 338 1412 322 1417 320 1430 305 1463 273 1477 263 1517 247 1540 228 1561 210 1580 188 1595 167 1609 146 1621 130";
const MAJOR_N = ["M400 1390L480 1310 560 1235 650 1140 730 1050 860 900 950 810 1060 705 1150 600 1250 465 1400 290 1500 185 1568 165", "M860 900L950 800 970 745 1060 680 1100 640 1180 560 1290 400 1420 240 1510 130 1568 105", "M1262 1410L1268 1300 1275 1230 1300 1150 1340 1100 1395 1060 1395 1020 1385 920 1392 700 1390 560 1415 490 1440 460 1500 350 1568 300", "M900 1200L930 1130 940 1080 1000 920 1070 760 1160 640 1260 480", "M650 1140L700 1065 730 1150 735 1220 700 1225 760 1330 765 1390", "M7 1370L80 1345 140 1355 240 1370M250 1360L400 1320 500 1340 580 1350 700 1320 830 1290 900 1200M720 1150L800 1135 900 1145", "M735 1070L850 1290 860 1390M700 1240L665 1330 663 1390M965 790L965 1000"];
const MINOR_N = ["M260 1250L300 1235 380 1235 510 1275 620 1240 690 1215 760 1255 860 1258 970 1255", "M210 1280L280 1262 340 1262 470 1300 640 1320 700 1320", "M240 1330L540 1325 M380 1340L600 1400M105 1295V1390M280 1240V1390M350 1230V1330M440 1260V1370", "M785 1050V1390M840 970V1390M892 910V1100M1000 1010L1000 1170M1030 880L1110 960 1127 1030 1127 1390M1240 1410L1243 740 1255 610", "M1415 75L1417 230 1411 460 M1417 570V1120M1320 206H1500M1243 912H1417M960 1167H1290M1065 1040H1470M735 1167L960 1167M1010 1270H1240M1080 1322H1285", "M860 905L950 895 1010 910M785 1055L900 1022 960 1020 1065 1040M985 1100L1030 1090M1090 780L1150 900 1175 960V1150L1185 1190V1390", "M1155 430L1220 590 1250 670M1226 350V590M1250 320L1305 460M1385 0L1290 280 1240 340 1155 430 1090 530 1060 610 1010 640 970 740", "M1260 465L1280 540 1300 562 1390 562M1295 600V520L1345 455H1417M1250 770L1330 610 1385 605 1430 580 1568 580", "M930 1280L935 1160 960 1180 990 1240 1030 1270M985 1160L1000 1250 970 1290 1010 1400M960 1250L1090 1300 1240 1300", "M640 1150L620 1250 640 1390M730 1130L760 1200 740 1290 780 1390M690 1210L730 1250 735 1320 700 1390M850 905L860 1000 890 1080 910 1190", "M1450 1050L1500 960 1568 1040M1240 1060L1243 1410M1417 920L1405 980 1395 1010"];
const MAJOR_S = ["M20 165L100 235 180 290 260 400 340 460 420 570 480 650 560 740 600 840 640 900 660 960 740 1020 770 1080", "M60 380L150 310 210 280 390 280 430 290 480 330 515 380 505 450 480 620 475 700 495 780 475 920 490 1030 465 1130 510 1220 535 1390 545 1440", "M590 0L580 120 540 220 450 275 390 280M580 255L640 300 680 390 780 480 850 480 920 515 1060 525 1190 520 1400 555 1568 580", "M400 10L402 110 428 170M515 250L505 290 515 385M410 600L400 900 440 1050 470 1130 560 1270 700 1440", "M20 570L50 680 120 750 150 850 140 940 180 1000 210 1080M280 1390L430 1240 465 1130M880 1100L920 1230 1010 1340 1110 1420", "M20 1330L100 1420 270 1440M340 1410L540 1410 700 1420 850 1430"];
const MINOR_S = ["M20 10H400M20 110L90 120 560 105 640 110M20 140H170L420 235 560 380 M120 440L180 432 300 435 370 383 600 383M190 330H390M90 0V140M258 30V330M385 0V380M470 30V200M427 170V500", "M530 285L770 500M600 380L650 430 800 560 930 640 1050 760 1140 870 1230 1010M800 0L805 300 820 470M820 500L815 720 808 900M810 930V1440", "M480 650L700 900 820 1050M430 540L600 560M20 500L90 440M480 740H140M270 500V1400M250 850L400 950M200 1000L230 1025 480 1030 560 1048H740", "M740 20L850 80 900 130M1260 0V260L1268 450M1258 500V820M1230 880V1440M1090 280L1200 320 1380 450 1500 510 1568 525M930 640L1020 690 1120 720 1200 780 1240 840", "M940 1140L1020 1085 1110 1050 1150 1010H1230M970 60L960 200 1000 240 1050 180 1100 100M1050 180L1050 330 970 410 940 370M750 570V740", "M180 290L230 380 330 460 400 570 440 720 470 820 480 950M290 1400L430 1260M520 1020L620 1240 750 1440M420 1000L560 1200"];
const PLACES: [string, number, number][] = [
  ["Timberlake", 1625, 159], ["Euclid", 1483, 324], ["East Cleveland", 1394, 460], ["Cleveland Heights", 1433, 490], ["Mayfield Heights", 1600, 492],
  ["Cleveland", 1200, 524], ["Lakewood", 1022, 576], ["Rocky River", 953, 591], ["Shaker Heights", 1465, 595], ["Pepper Pike", 1590, 585],
  ["Warrensville Heights", 1503, 682], ["Garfield Heights", 1346, 724], ["Solon", 1628, 786], ["Bainbridge", 1801, 793], ["Macedonia", 1514, 958],
  ["Twinsburg", 1630, 960], ["Twinsburg Heights", 1598, 976], ["Aurora", 1791, 949], ["Boston Heights", 1506, 1069], ["Cuyahoga Valley", 1404, 1075],
  ["Willoughby", 1690, 218], ["Westlake", 818, 637], ["Olmsted", 824, 727], ["Brecksville", 1310, 944],
];
const DOTS: [number, number][] = [[1625, 145], [1483, 311], [1394, 447], [1433, 477], [1600, 478], [1200, 510], [1022, 563], [952, 577], [1465, 581], [1590, 571], [1503, 669], [1348, 710], [1628, 772], [1801, 779], [1514, 944], [1630, 947], [1598, 963], [1791, 935], [1506, 1055], [1403, 1062], [1687, 205], [1589, 502], [1552, 540], [1273, 452], [1892, 792], [1607, 1077], [1707, 167]];

function MapCanvas() {
  const road = { fill: "none", vectorEffect: "non-scaling-stroke" as const };
  return (
    <svg className="block" width="1096" height="950" viewBox="824 130 1096 950">
      <rect x="824" y="130" width="1096" height="950" fill="#0c0c0c" />
      {CONTOURS.map((c) => (
        <g key={c.fill}>
          <path d={c.area} fill={c.fill} shapeRendering="crispEdges" />
          <path d={c.line} fill="none" stroke={c.stroke} strokeWidth="1.200" />
        </g>
      ))}
      <path d={COAST + "H824Z"} fill="#191919" stroke="#333" strokeWidth="1" />
      <path d="M1228 486L1235 470 1262 452 1270 457 1240 487zM1292 430L1297 416 1304 412 1313 430zM1410 338L1414 320 1424 322 1428 335zM1205 500L1240 462 1250 458 1215 506z" fill="#1c1c1c" stroke="#444" />
      <g stroke="#fff" strokeOpacity=".16" strokeWidth="1.300">
        <g transform="translate(820 130) scale(.5741 .3333)">{MINOR_N.map((d) => <path key={d} d={d} {...road} />)}</g>
        <g transform="translate(1320 600) scale(.3827 .3333)">{MINOR_S.map((d) => <path key={d} d={d} {...road} />)}</g>
      </g>
      <g stroke="#4a4a4a" strokeWidth="1.900" strokeLinejoin="round">
        <g transform="translate(820 130) scale(.5741 .3333)">{MAJOR_N.map((d) => <path key={d} d={d} {...road} />)}</g>
        <g transform="translate(1320 600) scale(.3827 .3333)">{MAJOR_S.map((d) => <path key={d} d={d} {...road} />)}</g>
      </g>
      {DOTS.map(([x, y]) => <circle key={`${x}-${y}`} cx={x} cy={y} r="2.800" fill="#777" />)}
      <g fill="#7a7a7a" stroke="#111" strokeWidth="2" strokeOpacity=".6" paintOrder="stroke" textAnchor="middle" fontSize="14" fontFamily="'Open Sans', sans-serif" fontWeight="500">
        {PLACES.map(([t, x, y]) => <text key={t} x={x} y={y}>{t}</text>)}
      </g>
    </svg>
  );
}

/* ---------- filter popup ---------- */
const VALUES = ['""', '"Agricultural"', '"Commerc. Exempt"', '"Commercial"', '"Exempt"', '"Highway"', '"Industr. Exempt"', '"Industrial"', '"Land bank"', '"Mineral Rights"', '"Public utilities"', '"Residential"', '"Residential Exempt"'];
const CHOSEN: [string, boolean][] = [['"Residential"', false], ['"Residential Exempt"', false], ["Empty", true]];

function FilterPopup() {
  return (
    <div className="absolute left-[24px] top-[464px] flex h-[480px] w-[480px] rounded-[4px] bg-white text-[13.333px] tracking-[-0.250px] text-[#273d56] shadow-[0_0_14px_rgba(31,51,73,0.250)] [&_.font-bold]:tracking-[-0.100px]">
      <svg className="absolute -left-2 top-[297px]" width="8" height="16" viewBox="0 0 8 16"><path d="M8 0v16L0 8z" fill="#fff" /></svg>
      <div className="flex w-[280px] flex-col">
        <div className="h-[130px] shrink-0 border-b border-[#c6d2e1] px-[16px] pt-[16px]">
          <div className="flex justify-between"><span className="text-[16px] font-bold leading-[24px] text-[#1f3349]">Property Class</span><span className="leading-[20px]">(13)</span></div>
          <div className="mt-[8px] leading-[20px]">String</div>
          <div className="mt-[16px] flex h-[29px] items-center rounded-[4px] border border-[#607d9c] pl-[12px] pr-[10px] font-bold text-[#607d9c]"><span className="flex-1">is any of</span><Caret /></div>
        </div>
        <div className="mt-[16px] flex flex-1 flex-col gap-[8px] px-[16px]">
          {CHOSEN.map(([v, dark]) => (
            <div key={v} className="flex h-[32px] items-center">
              <div className={`flex h-[32px] w-[220px] items-center justify-center rounded-[4px] pt-px font-bold ${dark ? "bg-[#273d56] text-[#c9cfd6]" : "bg-[#607d9c] text-white"}`}>{v}</div>
              <Trash className="mb-px ml-[9px] text-[#607d9c]" />
            </div>
          ))}
        </div>
        <div className="mx-[16px] mb-[16px] flex h-[32px] items-center justify-center rounded-[4px] border border-[#607d9c] pl-[5px] pt-px font-bold text-[#607d9c]"><Plus className="mr-[9px]" />Add new filter value</div>
      </div>
      <div className="flex w-[200px] flex-col rounded-r-[4px] bg-[#f4f7fc] pt-[16px]">
        <div className="px-[16px] font-bold leading-[20px] text-[#1f3349]">Edit filter</div>
        <div className="mx-[16px] mb-[16px] mt-[8px] flex h-[32px] shrink-0 items-center overflow-hidden whitespace-nowrap rounded-[4px] border border-[#c6d2e1] bg-white px-[7px] tracking-[-0.200px] text-[#e1e7f0]">Property Class is any of...</div>
        {VALUES.map((v, i) => (
          <div key={v} className={`h-[28px] shrink-0 px-[16px] leading-[28px] ${i === 0 ? "mb-px" : ""} ${i === 0 || i === 4 ? "bg-[#c6d2e1]" : ""}`}>{v}</div>
        ))}
      </div>
      <svg className="absolute left-[119px] top-[-14px]" width="50" height="50" viewBox="0 0 50 50" fill="none" strokeWidth="4"><circle cx="25" cy="25" r="22" stroke="#273d56" strokeOpacity=".5" strokeDasharray="103.700 34.500" transform="rotate(-90 25 25)" /><path d="M3 25A22 22 0 0 1 25 3" stroke="#fff" /></svg>
    </div>
  );
}

/* ---------- tool panel ---------- */
const TOOLS: [string, React.ReactNode][] = [
  ["Map position", <svg width="18" height="18" viewBox="0 0 18 18" fill="none" stroke="currentColor"><circle cx="9" cy="9" r="6" strokeWidth="2.400" /><circle cx="9" cy="9" r="1" fill="currentColor" /><path d="M9 0v4M9 14v4M0 9h4M14 9h4" strokeWidth="2.400" /></svg>],
  ["Debug", <FaBug size={15} />],
  ["Style reference", <svg width="16" height="14" viewBox="0 0 16 14"><path d="M0 .5q5-1 8 1.500 3-2.500 8-1.500v10.500q-5-.5-8 3-3-3.500-8-3z" fill="currentColor" /><path d="M6.800 3.500h2.400v7.500H6.800z" fill="#fff" /></svg>],
  ["History", <svg width="20" height="15" viewBox="0 0 20 15" fill="currentColor"><rect width="10" height="4" rx="1" /><rect y="5.500" width="10" height="4" rx="1" /><rect y="11" width="10" height="4" rx="1" /><path d="M12.500 13.500q8-3 4-9.500" fill="none" stroke="currentColor" strokeWidth="2.800" /><path d="M12 0h6.500l-6 6.500z" /></svg>],
  ["Light", <svg width="16" height="16" viewBox="0 0 16 16"><path d="M8 0l2 3.600 4.900-.6L12.500 8l2.400 5-4.900-.6L8 16l-2-3.600-4.900.6L3.500 8 1.100 3 6 3.600z" fill="currentColor" /><path d="M8 4.500a3.500 3.500 0 0 1 0 7z" fill="#fff" /></svg>],
  ["Fonts", <svg width="16" height="13" viewBox="0 0 16 13" fill="none" stroke="currentColor" strokeWidth="2.300"><path d="M0 1.700h9M4.500 1.700V12M12 2v8q0 1.500 1.500 1.500H16M9.500 5.500H16" /></svg>],
  ["Images", <svg width="16" height="14" viewBox="0 0 16 14"><rect width="16" height="14" rx="1.500" fill="currentColor" /><path d="M3 3h10v7q-2 1.500-5 0H3z" fill="#fff" /><circle cx="10" cy="6" r="2" fill="currentColor" /><path d="M3 10l2-3 2 2z" fill="currentColor" /></svg>],
  ["Help", <FaQuestionCircle size={18} />],
];

function ToolPanel() {
  return (
    <div className="absolute right-[16px] top-[16px] flex w-[192px] flex-col gap-[16px] text-[13.333px] tracking-[-0.150px] text-[#273d56]">
      <div className="h-[420px] rounded-[4px] bg-white">
        <div className="flex justify-between px-[16px] pt-[16px]">
          <div className="flex h-[32px] w-[120px] items-center justify-center rounded-[4px] bg-[#4264fb] pt-px font-bold text-white">Publish style</div>
          <div className="flex h-[32px] w-[32px] items-center justify-center rounded-[4px] border border-[#607d9c] text-[#607d9c]">
            <svg width="19" height="19" viewBox="0 0 19 19" fill="currentColor"><path d="M5 0h9q1 0 1 1v4h3q1 0 1 1v6q0 1-1 1h-1V8.500H2V13H1q-1 0-1-1V6q0-1 1-1h3V1q0-1 1-1z" /><path d="M3.500 8h12v11h-12z" /><path d="M5.500 10h8v6h-8z" fill="#fff" /><path d="M6.500 11.300h6v1.400h-6zM6.500 14h6v1.200h-6z" /></svg>
          </div>
        </div>
        <div className="mx-[16px] mt-[16px] flex h-[32px] items-center rounded-[4px] border border-[#c6d2e1] pl-[7px] text-[#e1e7f0]">
          <svg width="16" height="16" viewBox="0 0 16 16" fill="none" stroke="#c6d2e1" strokeWidth="2.200"><circle cx="6.200" cy="6.200" r="5" /><path d="M10 10l5.500 5.500" strokeWidth="2.800" /></svg><span className="ml-[8px] mt-px">Search places</span>
        </div>
        <div className="mt-[8px]">
          {TOOLS.map(([t, icon]) => (
            <div key={t} className="flex h-[32px] items-center pl-[16px]"><div className="flex w-[24px] justify-center">{icon}</div><span className="ml-[8px] pt-[2px]">{t}</span></div>
          ))}
        </div>
        <div className="mt-[8px] flex h-[51px] items-center border-t border-[#c6d2e1] pl-[16px] font-['DejaVu_Sans_Mono',monospace] text-[13px] tracking-[0.100px]"><b className="w-[41px]">9.9</b><span>-81.592,41.463</span></div>
      </div>
      <div className="flex h-[32px] divide-x divide-[#607d9c] overflow-hidden rounded-[4px] text-[#273d56]">
        <div className="flex flex-1 items-center justify-center bg-[#cfcfcf]"><Plus /></div>
        <div className="flex flex-1 items-center justify-center bg-[#cfcfcf]"><svg width="14" height="3" viewBox="0 0 14 3"><rect width="14" height="2.600" rx="1" fill="currentColor" /></svg></div>
        <div className="flex flex-1 items-center justify-center bg-[#cfcfcf]"><svg width="16" height="16" viewBox="0 0 16 16"><path d="M3.500 0h9q.8 0 1 1L16 14.500Q16 16 15 16H1q-1 0-1-1.500L2.500 1q.2-1 1-1z" fill="currentColor" /><path d="M7 2.500h2v3H7zM6.800 7h2.400v3H6.800zM6.500 12h3v4h-3z" fill="#cfcfcf" /></svg></div>
        <div className="flex flex-1 items-center justify-center bg-[#cfcfcf]"><svg width="14" height="15" viewBox="0 0 14 15"><path d="M7 0l7 15-7-4-7 4z" fill="currentColor" /></svg></div>
        <div className="flex flex-1 items-center justify-center bg-white"><svg width="17" height="16" viewBox="0 0 17 16" fill="none" stroke="currentColor" strokeWidth="2.200"><path d="M3 3l11 10M14 3L3 13M1.200 6V1.200H6M11 1.200h4.800V6M15.800 10v4.800H11M6 14.800H1.200V10" /></svg></div>
      </div>
    </div>
  );
}

export default function App() {
  return (
    <div className={`flex h-[1080px] w-[1920px] flex-col overflow-hidden bg-[#3c3b37] ${UI}`}>
      <SystemBar />
      <div className="flex h-[1049px]">
        <Launcher />
        <div className="flex w-[1856px] flex-col">
          <TabStrip />
          <NavBar />
          <BookmarksBar />
          <div className="flex h-[950px]">
            <LayersPanel />
            <DetailPanel />
            <div className="relative h-[950px] w-[1096px] overflow-hidden">
              <MapCanvas />
              <FilterPopup />
              <ToolPanel />
            </div>
          </div>
        </div>
      </div>
    </div>
  );
}
